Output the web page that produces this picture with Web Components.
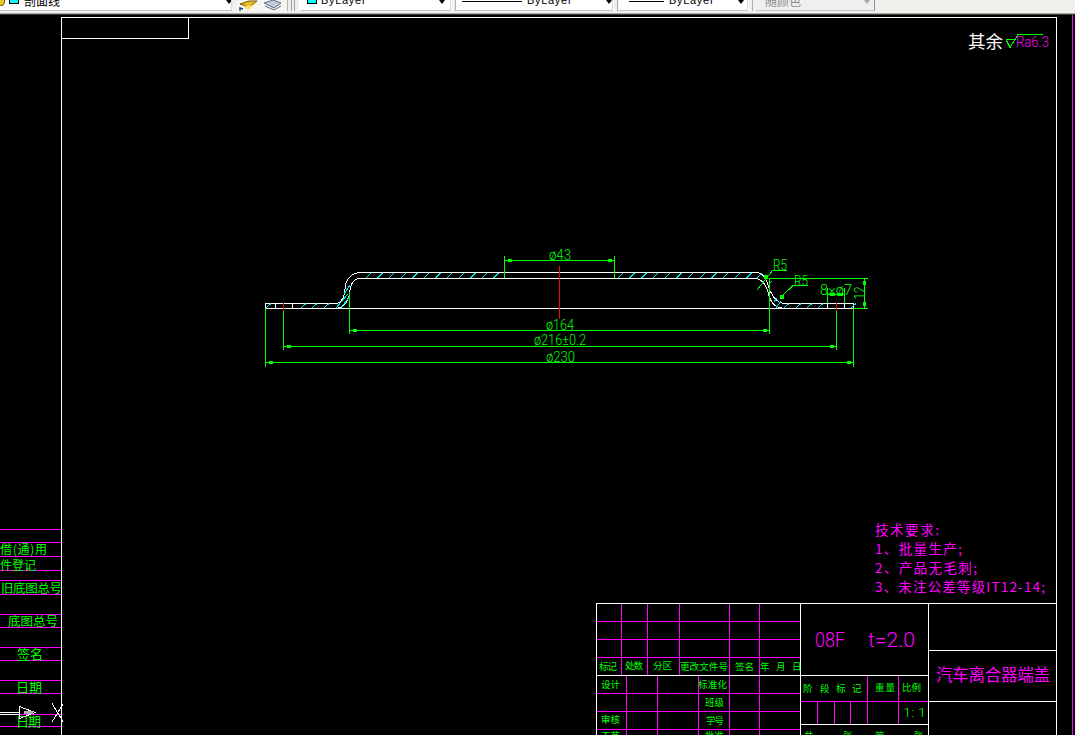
<!DOCTYPE html>
<html lang="zh">
<head>
<meta charset="utf-8">
<title>CAD</title>
<style>
html,body{margin:0;padding:0;background:#000;height:100%;overflow:hidden}
</style>
</head>
<body>
<cad-app>
  <cad-toolbar>
    <cad-combo style="width:232px;margin-right:4px" swatch="#00ffff" pad="9" gap="5" arrow="229" first>剖面线</cad-combo>
    <cad-layer-icons></cad-layer-icons>
    <cad-grip></cad-grip>
    <cad-combo style="width:151px" swatch="#00ffff" pad="7" gap="4" arrow="142">ByLayer</cad-combo>
    <cad-grip small></cad-grip>
    <cad-combo style="width:157px" line="60" pad="6" gap="5" arrow="153">ByLayer</cad-combo>
    <cad-grip small style="margin-right:1px"></cad-grip>
    <cad-combo style="width:129px" line="35" pad="10" gap="5" arrow="122">ByLayer</cad-combo>
    <cad-grip small style="margin-right:3px"></cad-grip>
    <cad-combo style="width:119px" pad="9" gap="0" arrow="111" disabled>随颜色</cad-combo>
  </cad-toolbar>
  <cad-canvas></cad-canvas>
</cad-app>
<script>
class CadApp extends HTMLElement{
  constructor(){super();this.attachShadow({mode:'open'}).innerHTML=`<style>:host{display:flex;flex-direction:column;width:1075px;height:735px;background:#000;overflow:hidden}</style><slot></slot>`;}
}
class CadToolbar extends HTMLElement{
  constructor(){super();this.attachShadow({mode:'open'}).innerHTML=`<style>
  :host{display:flex;align-items:flex-end;height:15px;box-sizing:border-box;background:#f0efeb;border-bottom:1px solid #3c3c3c;flex:none;overflow:hidden;padding-bottom:3px;box-shadow:inset 0 -1px 0 #a8a8a8;font:12px "Noto Sans CJK SC","Liberation Sans",sans-serif}
  </style><slot></slot>`;}
}
class CadCombo extends HTMLElement{
  connectedCallback(){
    const a=n=>this.getAttribute(n);
    const dis=this.hasAttribute('disabled');
    const lead=a('swatch')?`<i class="sw" style="background:${a('swatch')}"></i>`:a('line')?`<i class="ln" style="width:${a('line')}px"></i>`:'';
    const bulb=this.hasAttribute('first')?'<i class="bulb"></i>':'';
    this.shadowRoot||this.attachShadow({mode:'open'});
    this.shadowRoot.innerHTML=`<style>
    :host{display:flex;align-items:flex-end;flex:none;box-sizing:border-box;height:20px;position:relative;background:${dis?'#efefef':'#fff'};border-bottom:1px solid #c4c4c4;border-right:1px solid ${dis?'#909090':'#d8d8d8'};padding-left:${a('pad')}px;color:${dis?'#8a8a8a':'#000'};overflow:hidden}
    .row{display:flex;align-items:center;height:20px;flex:none;gap:${a('gap')}px;margin-bottom:0}
    .sw{display:block;width:8px;height:8px;border:1px solid #000;box-sizing:content-box;margin-top:-2px}
    .ln{display:block;height:1px;background:#000;margin-top:3px}
    .t{font:11px "Liberation Sans",sans-serif;letter-spacing:.7px;line-height:14px}
    .t.cjk{font:12px "Noto Sans CJK SC",sans-serif;letter-spacing:0}
    .bulb{position:absolute;left:-3px;bottom:4px;width:6px;height:7px;border-radius:50%;background:#e8c828;border:1px solid #6a5a10}
    .ar{position:absolute;left:${a('arrow')-3}px;bottom:6px;width:0;height:0;border:3.5px solid transparent;border-top:4px solid ${dis?'#a8a8a8':'#000'};border-bottom:0}
    </style>${bulb}<div class="row">${lead}<span class="t ${/[^\x00-\x7f]/.test(this.textContent)?'cjk':''}"><slot></slot></span></div><span class="ar"></span>`;
  }
}
class CadGrip extends HTMLElement{
  constructor(){super();this.attachShadow({mode:'open'}).innerHTML=`<style>
  :host{display:block;flex:none;height:14px;box-sizing:border-box;width:5px;border-right:1px solid #b0b0b0;border-left:1px solid #fff}
  :host(:not([small])){width:13px;border-left:1px solid #b0b0b0;border-right:1px solid #fff;background:linear-gradient(90deg,#f0efeb 0 3px,#a0a0a0 3px 4px,#f0efeb 4px 6px,#a0a0a0 6px 7px,#f0efeb 7px)}
  </style>`;}
}
class CadLayerIcons extends HTMLElement{
  constructor(){super();this.attachShadow({mode:'open'}).innerHTML=`<style>:host{display:block;flex:none;width:51px;height:11px;background:#f6f5f2}svg{display:block}</style>
  <svg width="51" height="11" viewBox="236 0 51 11">
   <path d="M240 4l9-3 8 0-8 6z" fill="#e8c020" stroke="#7a6000" stroke-width="1"/>
   <path d="M243 6l10-1 3-2-8 7z" fill="#f4dc60"/>
   <path d="M240 12l0-4 3 1" fill="none" stroke="#1c3c90" stroke-width="1.4"/>
   <path d="M264 3l9-3 8 3-7 5z" fill="#c0ccd8" stroke="#5a7088"/>
   <path d="M265 6l9 4 7-4" fill="none" stroke="#5a7088"/>
  </svg>`;}
}
const NS='http://www.w3.org/2000/svg';
class CadCanvas extends HTMLElement{
  constructor(){
    super();
    const root=this.attachShadow({mode:'open'});
    root.innerHTML=`<style>:host{display:block;flex:1;min-height:0;background:#000}svg{display:block}
    text{font-family:"Noto Sans CJK SC","Liberation Sans",sans-serif;dominant-baseline:central;white-space:pre}
    .s{font-family:Roboto,"Liberation Sans",sans-serif;font-weight:300}
    </style><svg width="1075" height="720" viewBox="0 15 1075 720"></svg>`;
    const svg=root.querySelector('svg');
    const W='#fff',M='#ff00ff',G='#00ff00',C='#00e8f0',R='#ff0000';
    const el=(n,at,parent=svg)=>{const e=document.createElementNS(NS,n);for(const k in at)e.setAttribute(k,at[k]);parent.appendChild(e);return e;};
    const L=(c,x1,y1,x2,y2)=>el('line',{x1,y1,x2,y2,stroke:c,'stroke-width':1,'shape-rendering':'crispEdges'});
    const P=(c,d)=>el('path',{d,stroke:c,'stroke-width':1,fill:'none','shape-rendering':'crispEdges'});
    const B=(c,x,y,w,h)=>el('rect',{x,y,width:w,height:h,fill:c,'shape-rendering':'crispEdges'});
    const T=(s,x,y,size,w,fill=G,cls='',extra={})=>{const at={x,y,'font-size':size,fill,...extra};if(w){at.textLength=w;at.lengthAdjust=cls==='s'?'spacingAndGlyphs':'spacing';}if(cls)at.class=cls;const t=el('text',at);t.textContent=s;return t;};

    // frame
    P(W,'M61.5 735V17.5H1056.5V735');
    P(W,'M61.5 38.5H188.5V17.5');
    L(M,1072.5,15,1072.5,735);

    // left stamp table
    [529,542,556,570,580,594,614,627,647,660,680,693,714,726].forEach(y=>L(M,0,y+.5,61,y+.5));
    T('借(通)用',0,548.5,12,47);
    T('件登记',0,564.5,12,36);
    T('旧底图总号',1,587,12.5,61);
    T('底图总号',8,620,12.5,50);
    T('签名',17,653.5,13,26);
    T('日期',16,686.5,13,26);
    T('日期',16,720,13,25);
    // UCS marker
    P(W,'M0 712.5H19.5V706.5L35 712.5L19.5 718.5V712.5');
    P(W,'M0 714.5H19');
    B('#b0b0b0',24,711,9,3);
    P(W,'M52 703.5L63 721.5M63 704L52 722');

    // roughness note
    T('其余',968,40,17.5,35,W);
    P(G,'M1006 39.5H1015L1010 47.5L1006 39.5M1010 47.5L1018 34.5H1043');
    T('Ra6.3',1016,41.5,14,33,M,'s');

    // part outline
    P(W,'M265.5 308.5V303.5H337C342 302 345 296 345 289C345 280 351 273 360 272.5H757C763 273 766 279 768 285C770 293 776 303 784 303.5H853.5V308.5');
    P(W,'M265.5 308.5H853.5');
    P(W,'M338 308C345 307 349 300 350 290C351 282 355 278.5 360 278.5H755C762 279 766 285 768 292C770 301 774 307.5 782 308');
    P(W,'M275.5 303.5V308M292.5 303.5V308M827.5 303.5V308M844.5 303.5V308');
    // hatching
    const h=(x,y0,y1,d=5)=>L(C,x,y0,x+d,y1);
    for(let i=0;i<12;i++)h(366+i*11.6,278,273);
    for(let i=0;i<12;i++)h(618+i*11.7,278,273);
    [266,301,312,324,784,796,807,818,851].forEach(x=>h(x,308,303.5));
    h(336,308,294,12);h(341,308,296,9);h(344,294,285,6);
    h(757,278,273);h(769,284,281,3);h(774,302,298,3);h(776,308,301,5);
    // center marks
    L(R,559.5,266,559.5,319);L(R,283.5,303,283.5,311);L(R,836.5,303,836.5,311);

    // dimensions
    const arrows=(x1,x2,y)=>{B(G,x1+3,y-1.5,4,3);B(G,x2-7,y-1.5,4,3);};
    const dim=(x1,x2,y)=>{L(G,x1,y,x2,y);arrows(x1,x2,y);};
    L(G,504.5,256,504.5,278);L(G,614.5,256,614.5,278);dim(504.5,614.5,260.5);
    T('ø43',549,254.5,14,22,G,'s');
    L(G,349.5,292,349.5,334);L(G,769.5,278,769.5,334);dim(349.5,769.5,330.5);
    T('ø164',546,324.5,14,28,G,'s');
    L(G,283.5,311,283.5,350);L(G,836.5,311,836.5,350);dim(283.5,836.5,346.5);
    T('ø216±0.2',534,340,14,52,G,'s');
    L(G,265.5,308,265.5,367);L(G,853.5,308,853.5,367);dim(265.5,853.5,362.5);
    T('ø230',546,356.5,14,29,G,'s');
    // height 12
    L(G,769,278.5,868,278.5);L(G,853,308.5,868,308.5);L(G,864.5,278,864.5,308);
    B(G,863,281,3,4);B(G,863,302,3,4);
    T('12',0,0,14,13,G,'s',{transform:'translate(859.5,299.5) rotate(-90)'});
    // 8xø7
    L(G,827.5,288,827.5,303);L(G,844.5,288,844.5,303);L(G,827,294.5,845,294.5);
    B(G,830,293,5,3);B(G,838,293,5,3);
    T('8×ø7',820,289.5,15,32,G,'s');
    // radii
    P(G,'M757 290L773 270H787');
    B(G,764,275,4,4);
    T('R5',773,265,15,14,G,'s');
    P(G,'M780 298L793.5 285H808');
    B(G,780,295,4,4);
    T('R5',794,280.5,15,14,G,'s');

    // technical requirements
    T('技术要求:',875,529,13.5,64,M);
    T('1、批量生产;',875,548,13.5,87,M);
    T('2、产品无毛刺;',875,567,13.5,102,M);
    T('3、未注公差等级IT12-14;',875,586,13.5,170,M);

    // title block
    P(W,'M596.5 735V603.5H1056.5');
    L(W,800.5,603,800.5,735);L(W,928.5,603,928.5,735);
    L(W,596,675.5,928,675.5);
    L(W,928,650.5,1056,650.5);L(W,928,701.5,1056,701.5);
    L(W,800,724.5,928,724.5);
    [621,639,657].forEach(y=>L(M,597,y+.5,800,y+.5));
    [621,647,679,729,759].forEach(x=>L(M,x+.5,604,x+.5,675));
    [693,711,729].forEach(y=>L(M,597,y+.5,800,y+.5));
    [626,657,698,729,759].forEach(x=>L(M,x+.5,676,x+.5,735));
    L(M,801,701.5,928,701.5);
    [817,834,850].forEach(x=>L(M,x+.5,702,x+.5,724));
    [867,898].forEach(x=>L(M,x+.5,676,x+.5,724));

    const s=9.5;
    T('标记',599,665.5,s,18);T('处数',625,664.5,s,18);T('分区',653,664.5,s,19);
    T('更改文件号',680,665.5,s,48);T('签名',735,665.5,s,19);T('年',760,665.5,s);T('月',776,665.5,s);T('日',792,665.5,s);
    T('设计',601,683.5,s,19);T('标准化',698,683.5,s,29);T('班级',705,701.5,s,19);
    T('审核',601,718.5,s,19);T('学号',706,719.5,s,18);T('工艺',601,735,s,19);T('批准',705,735,s,19);
    T('阶',803,687.5,s);T('段',820,687.5,s);T('标',836,687.5,s);T('记',852,687.5,s);
    T('重量',875,686.5,s,20);T('比例',902,686.5,s,19);
    T('1: 1',903,712.5,13,23,G,'s');
    T('共',804,735,s);T('张',843,735,s);T('第',875,735,s);T('张',914,735,s);
    T('08F',815,639.5,20,30,M,'s');
    T('t=2.0',868,639.5,20,47,M,'s');
    T('汽车离合器端盖',936,674,16.5,114,M);
  }
}
customElements.define('cad-app',CadApp);
customElements.define('cad-toolbar',CadToolbar);
customElements.define('cad-combo',CadCombo);
customElements.define('cad-grip',CadGrip);
customElements.define('cad-layer-icons',CadLayerIcons);
customElements.define('cad-canvas',CadCanvas);
</script>
</body>
</html>
